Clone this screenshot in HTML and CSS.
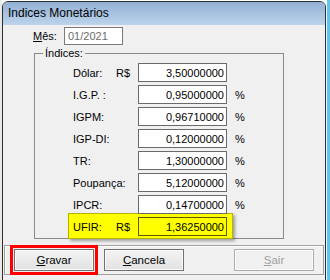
FILE: index.html
```html
<!DOCTYPE html>
<html lang="pt">

<head>
  <meta charset="UTF-8">
  <title>Indices Monetários</title>
  <link rel="stylesheet" href="styles.css">
</head>

<body>

  <div class="desktop">
    <!-- Dialog window -->
    <div class="window">
      <div class="titlebar">Indices Monetários</div>

      <div class="client">
        <!-- Month -->
        <div class="month-row">
          <label class="month-label" for="mes"><u>M</u>ês:</label>
          <input class="field month-field" id="mes" type="text" value="01/2021" readonly>
        </div>

        <!-- Index values -->
        <fieldset class="group">
          <legend>Índices:</legend>
          <div class="rows">
            <div class="row">
              <span class="lbl">Dólar:</span><span class="cur">R$</span>
              <input class="field num" type="text" value="3,50000000">
            </div>
            <div class="row">
              <span class="lbl">I.G.P. :</span><span class="cur"></span>
              <input class="field num" type="text" value="0,95000000"><span class="pct">%</span>
            </div>
            <div class="row">
              <span class="lbl">IGPM:</span><span class="cur"></span>
              <input class="field num" type="text" value="0,96710000"><span class="pct">%</span>
            </div>
            <div class="row">
              <span class="lbl">IGP-DI:</span><span class="cur"></span>
              <input class="field num" type="text" value="0,12000000"><span class="pct">%</span>
            </div>
            <div class="row">
              <span class="lbl">TR:</span><span class="cur"></span>
              <input class="field num" type="text" value="1,30000000"><span class="pct">%</span>
            </div>
            <div class="row">
              <span class="lbl">Poupança:</span><span class="cur"></span>
              <input class="field num" type="text" value="5,12000000"><span class="pct">%</span>
            </div>
            <div class="row">
              <span class="lbl">IPCR:</span><span class="cur"></span>
              <input class="field num" type="text" value="0,14700000"><span class="pct">%</span>
            </div>
            <div class="row ufir">
              <span class="lbl">UFIR:</span><span class="cur">R$</span>
              <input class="field num" type="text" value="1,36250000">
            </div>
          </div>
        </fieldset>

        <!-- Buttons -->
        <div class="button-bar">
          <button class="btn btn-save"><u>G</u>ravar</button>
          <button class="btn"><u>C</u>ancela</button>
          <button class="btn btn-exit" disabled><u>S</u>air</button>
        </div>
      </div>
    </div>
    <div class="edge"></div>
  </div>

</body>

</html>
```

FILE: styles.css
```css
body {
  margin: 0;
  padding: 0;
  background: #ffffff;
  font-family: "Liberation Sans", Arial, sans-serif;
  font-size: 11px;
  color: #000;
}

.desktop {
  display: flex;
  height: 280px;
  overflow: hidden;
  border-left: 2px solid #e8e8e8;
}

.window {
  margin-top: 1px;
  width: 322px;
  height: 290px;
  border: 1px solid #2e2e2e;
  border-radius: 6px 6px 0 0;
  background: #f0f0f0;
  overflow: hidden;
}

.edge {
  width: 3px;
  margin-left: 1px;
  background: #58c8ef;
}

.titlebar {
  height: 23px;
  line-height: 23px;
  padding-left: 5px;
  font-size: 12px;
  background: linear-gradient(#93b0d4, #bcd3eb);
}

.client {
  padding-top: 2px;
}

.month-row {
  display: flex;
  align-items: center;
  padding-left: 30px;
}

.month-label {
  width: 31px;
}

.field {
  box-sizing: border-box;
  height: 19px;
  margin: 0;
  border: 1px solid #6a6a6a;
  background: #fff;
  font-family: "Liberation Sans", Arial, sans-serif;
  font-size: 11px;
  color: #000;
  outline: none;
}

.month-field {
  width: 59px;
  height: 18px;
  padding: 0 3px;
  color: #6d6d6d;
  border-color: #7a7a7a;
}

.group {
  box-sizing: border-box;
  width: 250px;
  margin: 2px 0 0 31px;
  padding: 0;
  border: 1px solid #8a8a8a;
}

.group legend {
  margin-left: 8px;
  padding: 0 2px;
  line-height: 13px;
}

.rows {
  padding: 3px 0 0 38px;
}

.row {
  display: flex;
  align-items: center;
  height: 19px;
  margin-bottom: 3px;
}

.lbl {
  width: 43px;
}

.cur {
  width: 22px;
}

.num {
  width: 89px;
  padding: 0 2px;
  text-align: right;
}

.pct {
  margin-left: 8px;
}

.ufir {
  width: max-content;
  margin: -4px 0 -1px -5px;
  padding: 3px 5px 2px 4px;
  border: 1px solid #b5b500;
  background: #ffff00;
  box-shadow: 2px 2px 3px rgba(0, 0, 0, 0.35);
}

.ufir .num {
  background: #ffff00;
  border-color: #5a5a00;
}

.button-bar {
  display: flex;
  width: 320px;
  box-sizing: border-box;
  margin: 6px 0 0 1px;
  padding: 3px 9px;
  border: 1px solid #a0a0a0;
  box-shadow: inset 1px 1px 0 #fff;
}

.btn {
  box-sizing: border-box;
  width: 80px;
  height: 22px;
  margin: 0 10px 0 0;
  padding: 0;
  border: 1px solid #707070;
  background: linear-gradient(#f3f3f3, #e2e2e2);
  box-shadow: inset 0 0 0 1px #fbfbfb;
  font-family: "Liberation Sans", Arial, sans-serif;
  font-size: 11.5px;
  color: #000;
}

.btn-save {
  outline: 3px solid #ff0000;
  outline-offset: 1px;
}

.btn-exit {
  margin: 0 0 0 auto;
  color: #a0a0a0;
  border-color: #adadad;
  background: #f0f0f0;
}
```
